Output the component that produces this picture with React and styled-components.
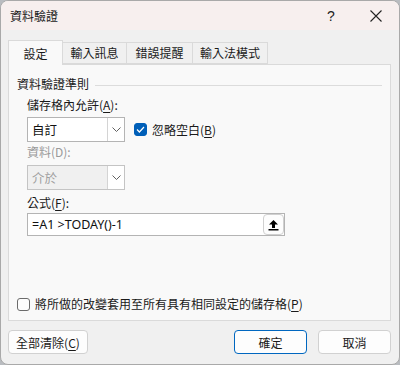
import React from "react";
import styled, { createGlobalStyle } from "styled-components";

const GlobalStyle = createGlobalStyle`
  html, body {
    margin: 0;
    padding: 0;
    background: #b9bcc0;
  }
  body {
    font-family: "Noto Sans CJK TC", "Noto Sans", "Liberation Sans", sans-serif;
    font-size: 12px;
    color: #1a1a1a;
  }
`;

const Window = styled.div`
  box-sizing: border-box;
  width: 400px;
  height: 365px;
  border: 1px solid #a9a9a9;
  border-radius: 8px;
  overflow: hidden;
  background: #f0f0f0;
  display: flex;
  flex-direction: column;
`;

const TitleBar = styled.div`
  height: 29px;
  flex-shrink: 0;
  background: #f7efee;
  display: flex;
  align-items: center;
  padding-left: 9px;
`;

const Title = styled.div`
  flex: 1;
  font-size: 12px;
  line-height: 16px;
`;

const TitleButton = styled.div`
  width: ${(p) => p.$w}px;
  height: 29px;
  display: flex;
  align-items: center;
  justify-content: center;
  font-family: "Liberation Sans", sans-serif;
  font-size: 14px;
  color: #222;
`;

const Body = styled.div`
  flex: 1;
  display: flex;
  flex-direction: column;
  padding: 10px 8px 0 7px;
`;

const TabRow = styled.div`
  display: flex;
  align-items: flex-end;
  height: 24px;
  position: relative;
  z-index: 1;
`;

const Tab = styled.div`
  box-sizing: border-box;
  width: ${(p) => p.$w}px;
  height: ${(p) => (p.$active ? 25 : 22)}px;
  display: flex;
  align-items: center;
  justify-content: center;
  border: 1px solid #dadada;
  border-bottom: ${(p) => (p.$active ? "none" : "1px solid #dadada")};
  margin-left: ${(p) => (p.$first ? 0 : -1)}px;
  background: ${(p) => (p.$active ? "#f9f9f9" : "#f0f0f0")};
  padding-top: ${(p) => (p.$active ? 2 : 0)}px;
  font-size: 12px;
  line-height: 16px;
  margin-bottom: ${(p) => (p.$active ? -1 : 0)}px;
`;

const Panel = styled.div`
  box-sizing: border-box;
  height: 257px;
  border: 1px solid #dadada;
  background: #f9f9f9;
  display: flex;
  flex-direction: column;
  padding: 11px 8px 8px 8px;
`;

const GroupHeader = styled.div`
  display: flex;
  align-items: center;
  gap: 6px;
  line-height: 16px;
  &::after {
    content: "";
    flex: 1;
    height: 1px;
    background: #dcdcdc;
    margin-top: 2px;
  }
`;

const Indent = styled.div`
  display: flex;
  flex-direction: column;
  padding-left: 10px;
`;

const FieldLabel = styled.div`
  line-height: 16px;
  margin-top: ${(p) => p.$mt}px;
  color: ${(p) => (p.$disabled ? "#9a9a9a" : "#1a1a1a")};
`;

const Row = styled.div`
  display: flex;
  align-items: center;
  margin-top: ${(p) => p.$mt}px;
`;

const Select = styled.div`
  box-sizing: border-box;
  width: 98px;
  height: 25px;
  border: 1px solid ${(p) => (p.$disabled ? "#c4c4c4" : "#b4b4b4")};
  display: flex;
  background: #fff;
`;

const SelectValue = styled.div`
  flex: 1;
  display: flex;
  align-items: center;
  padding-left: 4px;
  font-size: 12.5px;
  background: ${(p) => (p.$disabled ? "#f0f0f0" : "#fff")};
  color: ${(p) => (p.$disabled ? "#a0a0a0" : "#111")};
`;

const SelectArrow = styled.div`
  width: 16px;
  border-left: 1px solid #d4d4d4;
  display: flex;
  align-items: center;
  justify-content: center;
  background: #fff;
`;

const CheckLabel = styled.label`
  display: flex;
  align-items: center;
  gap: 5px;
  margin-left: ${(p) => p.$ml || 0}px;
  line-height: 16px;
  font-size: 12px;
`;

const Box = styled.span`
  box-sizing: border-box;
  width: 13px;
  height: 13px;
  border-radius: 3px;
  border: 1px solid ${(p) => (p.$checked ? "#005fb8" : "#6b6b6b")};
  background: ${(p) => (p.$checked ? "#005fb8" : "#fdfdfd")};
  display: flex;
  align-items: center;
  justify-content: center;
`;

const Mn = styled.span`
  text-decoration: underline;
  text-underline-offset: 2px;
`;

const FormulaBox = styled.div`
  box-sizing: border-box;
  width: 258px;
  height: 23px;
  border: 1px solid #b4b4b4;
  background: #fff;
  display: flex;
  align-items: center;
  margin-top: 2px;
`;

const FormulaText = styled.div`
  flex: 1;
  padding-left: 4px;
  font-family: "Noto Sans", "Liberation Sans", sans-serif;
  font-size: 12.5px;
  color: #111;
`;

const CollapseButton = styled.div`
  box-sizing: border-box;
  width: 21px;
  height: 21px;
  border: 1px solid #d0d0d0;
  border-radius: 4px;
  background: #fdfdfd;
  display: flex;
  align-items: center;
  justify-content: center;
`;

const Spacer = styled.div`
  flex: 1;
`;

const Footer = styled.div`
  display: flex;
  align-items: center;
  gap: 11px;
  padding: 9px 0 0 0;
`;

const Button = styled.div`
  box-sizing: border-box;
  width: ${(p) => p.$w}px;
  height: 24px;
  border-radius: 4px;
  border: 1px solid ${(p) => (p.$primary ? "#0067c0" : "#d1d1d1")};
  background: #fdfdfd;
  display: flex;
  align-items: center;
  justify-content: center;
  font-size: 12px;
  margin-left: ${(p) => (p.$push ? "auto" : 0)};
`;

const Chevron = () => (
  <svg width="9" height="5" viewBox="0 0 9 5">
    <path d="M0.5 0.5 L4.5 4.5 L8.5 0.5" fill="none" stroke="#606060" strokeWidth="1" />
  </svg>
);

const CheckMark = () => (
  <svg width="9" height="7" viewBox="0 0 9 7">
    <path d="M1 3.5 L3.4 6 L8 1" fill="none" stroke="#fff" strokeWidth="1.2" />
  </svg>
);

const UpArrow = () => (
  <svg width="11" height="12" viewBox="0 0 11 12">
    <path d="M5.5 1 L10 5.5 L7 5.5 L7 9 L4 9 L4 5.5 L1 5.5 Z" fill="#000" />
    <rect x="0.5" y="10" width="10" height="1.5" fill="#000" />
  </svg>
);

const CloseIcon = () => (
  <svg width="12" height="12" viewBox="0 0 12 12">
    <path d="M0.5 0.5 L11.5 11.5 M11.5 0.5 L0.5 11.5" stroke="#222" strokeWidth="1.1" />
  </svg>
);

export default function App() {
  return (
    <>
      <GlobalStyle />
      <Window>
        <TitleBar>
          <Title>資料驗證</Title>
          <TitleButton $w={44}>?</TitleButton>
          <TitleButton $w={46}>
            <CloseIcon />
          </TitleButton>
        </TitleBar>
        <Body>
          <TabRow>
            <Tab $w={55} $active $first>設定</Tab>
            <Tab $w={65}>輸入訊息</Tab>
            <Tab $w={67}>錯誤提醒</Tab>
            <Tab $w={76}>輸入法模式</Tab>
          </TabRow>
          <Panel>
            <GroupHeader>資料驗證準則</GroupHeader>
            <Indent>
              <FieldLabel $mt={5}>
                儲存格內允許(<Mn>A</Mn>):
              </FieldLabel>
              <Row $mt={4}>
                <Select>
                  <SelectValue>自訂</SelectValue>
                  <SelectArrow>
                    <Chevron />
                  </SelectArrow>
                </Select>
                <CheckLabel $ml={9}>
                  <Box $checked>
                    <CheckMark />
                  </Box>
                  <span>
                    忽略空白(<Mn>B</Mn>)
                  </span>
                </CheckLabel>
              </Row>
              <FieldLabel $mt={2} $disabled>
                資料(D):
              </FieldLabel>
              <Row $mt={5}>
                <Select $disabled>
                  <SelectValue $disabled>介於</SelectValue>
                  <SelectArrow>
                    <Chevron />
                  </SelectArrow>
                </Select>
              </Row>
              <FieldLabel $mt={5}>
                公式(<Mn>F</Mn>):
              </FieldLabel>
              <FormulaBox>
                <FormulaText>=A1 &gt;TODAY()-1</FormulaText>
                <CollapseButton>
                  <UpArrow />
                </CollapseButton>
              </FormulaBox>
            </Indent>
            <Spacer />
            <CheckLabel>
              <Box />
              <span>
                將所做的改變套用至所有具有相同設定的儲存格(<Mn>P</Mn>)
              </span>
            </CheckLabel>
          </Panel>
          <Footer>
            <Button $w={80}>
              全部清除(<Mn>C</Mn>)
            </Button>
            <Button $w={73} $primary $push>
              確定
            </Button>
            <Button $w={73}>取消</Button>
          </Footer>
        </Body>
      </Window>
    </>
  );
}
